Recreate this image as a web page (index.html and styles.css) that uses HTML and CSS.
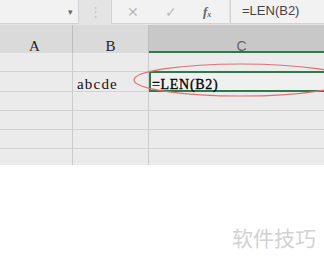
FILE: index.html
```html
<!DOCTYPE html>
<html lang="zh">
<head>
    <meta charset="UTF-8">
    <title>LEN</title>
    <link rel="stylesheet" href="styles.css">
</head>
<body>
<div class="sheet">
    <div class="toolbar">
        <div class="name-box"><span class="drop">&#9662;</span></div>
        <div class="grip">&#8942;</div>
        <div class="func-box">
            <span class="btn cancel">&#10005;</span>
            <span class="btn ok">&#10003;</span>
            <span class="btn fx">f<sub>x</sub></span>
        </div>
        <div class="input-box">=LEN(B2)</div>
    </div>

    <div class="head-row">
        <div class="col col-a">A</div>
        <div class="col col-b">B</div>
        <div class="col col-c active">C</div>
    </div>

    <div class="grid">
        <div class="row">
            <div class="cell col-a"></div>
            <div class="cell col-b"></div>
            <div class="cell col-c"></div>
        </div>
        <div class="row">
            <div class="cell col-a"></div>
            <div class="cell col-b">abcde</div>
            <div class="cell col-c selected">=LEN(B2)</div>
        </div>
        <div class="row">
            <div class="cell col-a"></div>
            <div class="cell col-b"></div>
            <div class="cell col-c"></div>
        </div>
        <div class="row">
            <div class="cell col-a"></div>
            <div class="cell col-b"></div>
            <div class="cell col-c"></div>
        </div>
        <div class="row">
            <div class="cell col-a"></div>
            <div class="cell col-b"></div>
            <div class="cell col-c"></div>
        </div>
        <div class="row last">
            <div class="cell col-a"></div>
            <div class="cell col-b"></div>
            <div class="cell col-c"></div>
        </div>

        <svg class="mark" width="220" height="40" viewBox="0 0 220 40">
            <ellipse cx="110" cy="18" rx="107" ry="16" fill="none" stroke="#e07070" stroke-width="1.2"/>
        </svg>
    </div>

    <div class="watermark">软件技巧</div>
</div>
</body>
</html>
```

FILE: styles.css
```css
body {
    margin: 0;
    background: #fff;
    font-family: "Liberation Sans", Arial, sans-serif;
    overflow: hidden;
}

.sheet {
    width: 324px;
    height: 262px;
    overflow: hidden;
    position: relative;
}

/* formula bar */
.toolbar {
    display: flex;
    height: 25px;
    background: #e4e4e4;
    width: 360px;
}

.name-box {
    width: 79px;
    height: 24px;
    background: #f2f2f2;
    border-right: 1px solid #d2d2d2;
    border-bottom: 1px solid #d2d2d2;
    display: flex;
    justify-content: flex-end;
    align-items: center;
    box-sizing: border-box;
    padding-right: 5px;
}

.drop {
    font-size: 9px;
    color: #666;
}

.grip {
    width: 32px;
    text-align: center;
    color: #c4c4c4;
    font-size: 13px;
    line-height: 24px;
}

.func-box {
    width: 118px;
    height: 24px;
    background: #f2f2f2;
    border-left: 1px solid #d2d2d2;
    border-bottom: 1px solid #d2d2d2;
    display: flex;
    align-items: center;
    box-sizing: border-box;
}

.btn {
    color: #b9b9b9;
    font-size: 14px;
}

.cancel {
    margin-left: 15px;
}

.ok {
    margin-left: 26px;
}

.fx {
    margin-left: 26px;
    color: #666;
    font-family: "Liberation Serif", serif;
    font-style: italic;
    font-weight: bold;
    font-size: 13px;
}

.fx sub {
    font-size: 8px;
    vertical-align: -1px;
}

.input-box {
    flex: 1;
    height: 24px;
    margin-left: 1px;
    background: #f2f2f2;
    border-left: 1px solid #d2d2d2;
    border-bottom: 1px solid #d2d2d2;
    box-sizing: border-box;
    padding-left: 11px;
    font-size: 13px;
    line-height: 22px;
    color: #444;
}

/* column heads */
.head-row {
    display: flex;
    height: 28px;
    background: #dadada;
    width: 400px;
}

.col {
    font-family: "Liberation Serif", serif;
    font-size: 15px;
    color: #222;
    text-align: center;
    line-height: 42px;
    height: 28px;
    box-sizing: border-box;
    border-right: 1px solid #bdbdbd;
}

.head-row .col-a {
    margin-left: -3px;
}

.col-a {
    width: 76px;
}

.col-b {
    width: 76px;
}

.col-c {
    width: 186px;
}

.col.active {
    background: #c8c8c8;
    color: #666;
    border-bottom: 2px solid #2f7a4a;
    font-family: "Liberation Sans", sans-serif;
    font-size: 14px;
}

/* cells */
.grid {
    position: relative;
    background: #ebebeb;
    width: 400px;
}

.row {
    display: flex;
    height: 18px;
    border-bottom: 1px solid #d2d2d2;
}

.row:nth-child(2) {
    height: 19px;
}

.row.last {
    height: 16px;
    border-bottom: none;
}

.cell {
    height: 100%;
    box-sizing: border-box;
    border-right: 1px solid #cbcbcb;
    font-family: "Liberation Serif", serif;
    font-size: 15px;
    letter-spacing: 1.2px;
    color: #111;
    line-height: 24px;
    padding-left: 4px;
}

.grid .col-a {
    margin-left: -3px;
}

.cell.selected {
    border: 2px solid #2f7a4a;
    background: #f0f0f0;
    margin-top: -1px;
    height: 21px;
    line-height: 23px;
    padding-left: 1px;
    font-size: 14px;
    letter-spacing: 0.7px;
    color: #000;
    -webkit-text-stroke: 0.3px #000;
}

.mark {
    position: absolute;
    left: 131px;
    top: 9px;
}

.watermark {
    position: absolute;
    left: 232px;
    top: 222px;
    font-family: "Noto Sans CJK SC", sans-serif;
    font-size: 21px;
    color: #d2d2d2;
}
```
